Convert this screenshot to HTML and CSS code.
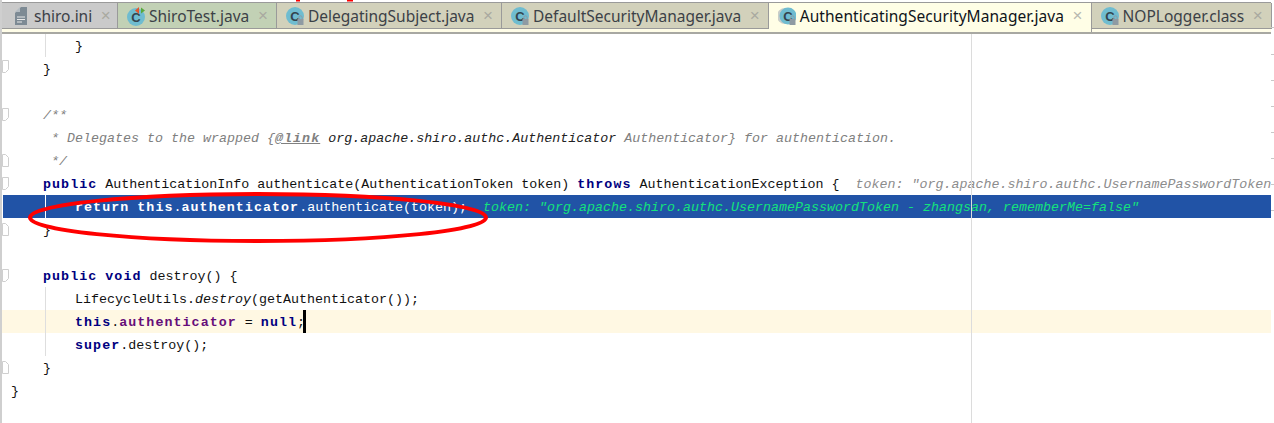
FILE: index.html
```html
<!DOCTYPE html>
<html lang="en">
<head>
<meta charset="utf-8">
<title>AuthenticatingSecurityManager.java</title>
<link rel="stylesheet" href="styles.css">
</head>
<body>
<div class="ide">
  <div class="tabs">
    <div class="tab tab-ini">
      <svg class="icon-file" width="12" height="20" viewBox="0 0 12 20"><path d="M6 1h6v18H0V7z" fill="#7d8a94"/><path d="M5 1v5H0z" fill="#b4bcc2"/><path d="M2 11h8M2 13.5h8M2 16h5" stroke="#e8e8e8" stroke-width="1" fill="none"/></svg>
      <span class="tab-name">shiro.ini</span><span class="close">×</span>
    </div>
    <div class="tab tab-test">
      <svg class="icon" width="18" height="20" viewBox="0 0 18 20"><circle cx="9" cy="11" r="9" fill="#6fbcd0"/><text x="9" y="15.5" class="c">C</text><path d="M12 1l-4 3.500 4 3.500z" fill="#e2562f"/><path d="M14 1.500l4 3-4 3z" fill="#59a83c"/></svg>
      <span class="tab-name">ShiroTest.java</span><span class="close">×</span>
    </div>
    <div class="tab">
      <svg class="icon" width="18" height="20" viewBox="0 0 18 20"><circle cx="9" cy="10" r="9" fill="#6fbcd0"/><text x="9" y="14.500" class="c">C</text><rect x="11.500" y="13" width="6" height="6" fill="#8e9aa3"/><path d="M12.800 13v-1.500a1.700 1.700 0 0 1 3.400 0V13" fill="none" stroke="#8e9aa3"/></svg>
      <span class="tab-name">DelegatingSubject.java</span><span class="close">×</span>
    </div>
    <div class="tab">
      <svg class="icon" width="18" height="20" viewBox="0 0 18 20"><circle cx="9" cy="10" r="9" fill="#6fbcd0"/><text x="9" y="14.500" class="c">C</text><rect x="11.500" y="13" width="6" height="6" fill="#8e9aa3"/><path d="M12.800 13v-1.500a1.700 1.700 0 0 1 3.400 0V13" fill="none" stroke="#8e9aa3"/></svg>
      <span class="tab-name">DefaultSecurityManager.java</span><span class="close">×</span>
    </div>
    <div class="tab tab-active">
      <svg class="icon" width="18" height="20" viewBox="0 0 18 20"><circle cx="7" cy="10" r="8" fill="#c9cdc9"/><circle cx="10" cy="10" r="8.500" fill="#6fbcd0"/><text x="10" y="14.500" class="c">C</text><rect x="11.500" y="13" width="6" height="6" fill="#8e9aa3"/><path d="M12.800 13v-1.500a1.700 1.700 0 0 1 3.400 0V13" fill="none" stroke="#8e9aa3"/></svg>
      <span class="tab-name">AuthenticatingSecurityManager.java</span><span class="close">×</span>
    </div>
    <div class="tab">
      <svg class="icon" width="18" height="20" viewBox="0 0 18 20"><circle cx="9" cy="10" r="9" fill="#6fbcd0"/><text x="9" y="14.500" class="c">C</text><rect x="11.500" y="13" width="6" height="6" fill="#8e9aa3"/><path d="M12.800 13v-1.500a1.700 1.700 0 0 1 3.400 0V13" fill="none" stroke="#8e9aa3"/></svg>
      <span class="tab-name">NOPLogger.class</span><span class="close">×</span>
    </div>
  </div>
  <div class="editor">
    <div class="line guide">        }</div>
    <div class="line">    }</div>
    <div class="line"></div>
    <div class="line comment">    /**</div>
    <div class="line comment">     * Delegates to the wrapped {<b class="doctag">@link</b> <span class="docref">org.apache.shiro.authc.Authenticator</span> Authenticator} for authentication.</div>
    <div class="line comment">     */</div>
    <div class="line">    <b class="kw">public</b> AuthenticationInfo authenticate(AuthenticationToken token) <b class="kw">throws</b> AuthenticationException {  <i class="hint">token: "org.apache.shiro.authc.UsernamePasswordToken - zhangsan, rememberMe=false"</i></div>
    <div class="line exec">        <b>return</b> <b>this</b>.<b>authenticator</b>.authenticate(token);  <i class="hint-exec">token: "org.apache.shiro.authc.UsernamePasswordToken - zhangsan, rememberMe=false"</i></div>
    <div class="line">    }</div>
    <div class="line"></div>
    <div class="line">    <b class="kw">public</b> <b class="kw">void</b> destroy() {</div>
    <div class="line guide">        LifecycleUtils.<i>destroy</i>(getAuthenticator());</div>
    <div class="line guide current">        <b class="kw">this</b>.<b class="field">authenticator</b> = <b class="kw">null</b>;<span class="caret"></span></div>
    <div class="line guide">        <b class="kw">super</b>.destroy();</div>
    <div class="line">    }</div>
    <div class="line">}</div>
  </div>
  <div class="margin-line"></div>
  <svg class="gutter" width="10" height="423" viewBox="0 0 10 423">
    <g fill="#fff" stroke="#cfcfcf">
      <path d="M2.500 60.500h6v9l-3 3h-3z"/>
      <path d="M2.500 108.500h6v9l-3 3h-3z"/>
      <path d="M2.500 166.500h6v-9l-3-3h-3z"/>
      <path d="M2.500 177.500h6v9l-3 3h-3z"/>
      <path d="M2.500 235.500h6v-9l-3-3h-3z"/>
      <path d="M2.500 269.500h6v9l-3 3h-3z"/>
      <path d="M2.500 373.500h6v-9l-3-3h-3z"/>
    </g>
  </svg>
  <svg class="ticks" width="3" height="423" viewBox="0 0 3 423">
    <path d="M0 27.500h3M0 54.500h3M0 80.500h3M0 106.500h3M0 132.500h3M0 158.500h3M0 184.500h3M0 210.500h3" stroke="#c8c8c8"/>
  </svg>
  <svg class="annotation" width="1274" height="423" viewBox="0 0 1274 423">
    <ellipse cx="258" cy="217.500" rx="228" ry="23.500" fill="none" stroke="#f00" stroke-width="4"/>
    <path d="M296 0h4v1.500h-4zM347 0h6v1.500h-6z" fill="#f00"/>
  </svg>
</div>
</body>
</html>
```
FILE: styles.css
```css
* { box-sizing: border-box; }
html, body { margin: 0; padding: 0; background: #fff; }
.ide {
  position: relative;
  width: 1274px;
  height: 423px;
  overflow: hidden;
  padding-top: 2px;
  border-left: 2px solid #cfcfcf;
}
.tabs {
  display: flex;
  width: 1269px;
  height: 32px;
  border-top: 1px solid #9a9a9a;
  border-bottom: 2px solid #a8a8a2;
  background: #fffde8;
  font-family: "Noto Sans", sans-serif;
  font-size: 15.5px;
  color: #3c4147;
}
.tab {
  display: flex;
  align-items: center;
  height: 26px;
  padding: 0 8px 0 9px;
  background: #d2d1bb;
  border-right: 1px solid #9a9a9a;
  border-bottom: 1px solid #9a9a9a;
}
.tab-ini { background: #cacaca; padding-left: 13px; width: 116px; }
.tab-test { background: #c2d1b5; }
.tab-active {
  height: 29px;
  padding-bottom: 3px;
  background: #fffee6;
  border-bottom: 0;
  color: #10141a;
  letter-spacing: .06px;
}
.tab-active .close { color: #b8b8b0; }
.icon, .icon-file { flex: none; }
.icon { margin-right: 4px; }
.icon-file { margin-right: 7px; }
.c {
  font-family: "Liberation Sans", sans-serif;
  font-size: 13px;
  font-weight: bold;
  fill: #33444f;
  text-anchor: middle;
}
.tab-name { white-space: nowrap; }
.close {
  width: 10px;
  margin-left: 8.6px;
  font-family: "Liberation Sans", sans-serif;
  font-size: 17px;
  line-height: 20px;
  text-align: center;
  color: #a9a9a0;
}
.editor {
  width: 1269px;
  font-family: "Liberation Mono", monospace;
  font-size: 13.33px;
  color: #111;
}
.line {
  height: 23px;
  line-height: 25px;
  padding-left: 9px;
  white-space: pre;
  overflow: hidden;
}
.line b { letter-spacing: 1.05px; }
.guide { background: linear-gradient(#dedede, #dedede) 43px 0 / 1px 100% no-repeat; }
.kw { color: #000080; }
.field { color: #660e7a; }
.comment { color: #808080; font-style: italic; }
.doctag { text-decoration: underline; letter-spacing: .7px; color: #808080; }
.docref { color: #222; }
.hint { color: #8c8c8c; }
.exec {
  margin-left: 1px;
  padding-left: 8px;
  color: #fff;
  background: #2153a6 linear-gradient(#fff, #fff) 42px 0 / 1px 100% no-repeat;
}
.hint-exec { color: #14e27c; }
.current { background-color: #fff8e3; }
.caret {
  display: inline-block;
  width: 3px;
  height: 23px;
  margin-left: -2px;
  vertical-align: top;
  background: #000;
}
.margin-line {
  position: absolute;
  left: 969px;
  top: 34px;
  width: 1px;
  height: 389px;
  background: #dcdcdc;
}
.gutter { position: absolute; left: -2px; top: 0; }
.ticks { position: absolute; left: 1269px; top: 0; }
.annotation { position: absolute; left: -2px; top: 0; }
```
